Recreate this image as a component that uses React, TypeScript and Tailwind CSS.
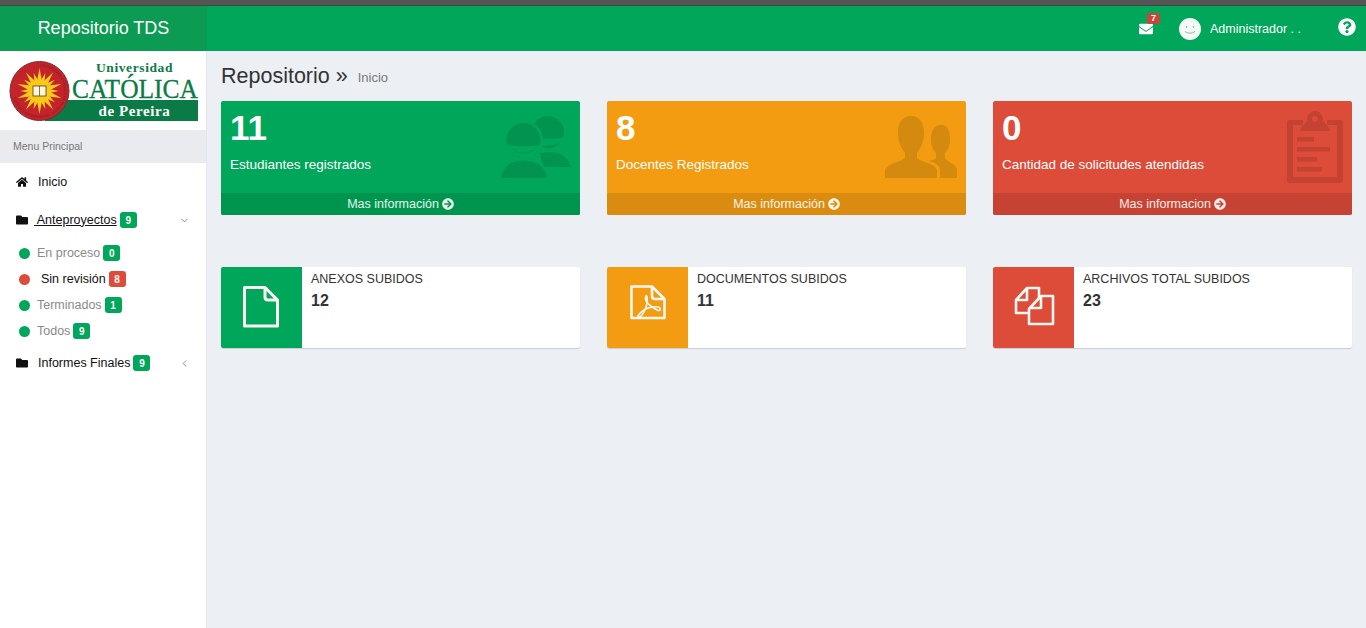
import { FaHome, FaFolder, FaEnvelope, FaQuestionCircle, FaArrowCircleRight } from 'react-icons/fa'
import { ChevronDown, ChevronLeft } from 'lucide-react'
import type { ReactNode } from 'react'

function StudentsIcon() {
  return (
    <svg viewBox="0 0 85 72" className="w-[85px] h-[72px]" fill="currentColor">
      {/* back person */}
      <path d="M37 22 A16 16 0 0 1 69 22 Q69 25 68.5 27.5 Q53 30 38 27.5 Q37 25 37 22 Z" />
      <path d="M43 35 Q53 37 65 33 A16 16 0 0 1 50 38 Z" />
      <path d="M45 43 C52 42 58 42 62 43 C68 45 74 49 76 57 L48 57 Z" />
      {/* front person with a ring in the card colour */}
      <circle cx="28.5" cy="30" r="19.5" fill="#00a65a" />
      <path d="M3 71 C6 52 18 48 29 48 C40 48 52 52 55 71 Z" fill="#00a65a" />
      <path d="M11.5 30 A17 17 0 0 1 45.5 30 Q45.5 33 44.5 35 Q28 37.5 12.5 35 Q11.5 33 11.5 30 Z" />
      <path d="M16 38 Q28 47 41 38 A17 17 0 0 1 16 38 Z" />
      <path d="M6 68 C8 56 16 51 29 50.5 C42 51 50 56 52 68 Z" />
    </svg>
  )
}

function TeachersIcon() {
  return (
    <svg viewBox="0 0 72 62" className="w-[72px] h-[62px]" fill="currentColor">
      <path d="M26 0 C17 0 13 7 13 17 C13 27 17 33 20 37 L20 42 C14 47 2 47 0 54 L0 62 L52 62 L52 54 C50 47 38 47 32 42 L32 37 C35 33 39 27 39 17 C39 7 35 0 26 0 Z" />
      <path d="M56 9 C49 9 46 15 46 23 C46 30 48 34 51 37 L51 42 C49 44 46 44 44 45 C50 47 55 49 55 54 L55 62 L72 62 L72 53 C70 47 63 47 60 42 L60 37 C63 34 65 30 65 23 C65 15 63 9 56 9 Z" />
    </svg>
  )
}

function ClipboardIcon() {
  return (
    <svg viewBox="0 0 56 72" className="w-[56px] h-[72px]" fill="currentColor">
      <path fillRule="evenodd" d="M3 9 H16 V14 H6 V66 H50 V14 H40 V9 H53 Q56 9 56 12 V69 Q56 72 53 72 H3 Q0 72 0 69 V12 Q0 9 3 9 Z" />
      <path fillRule="evenodd" d="M28 0 C33 0 36 4 36 9 C36 12 42 14 43 20 L13 20 C14 14 20 12 20 9 C20 4 23 0 28 0 Z M28 5 A3 3 0 1 0 28 11 A3 3 0 1 0 28 5 Z" />
      <rect x="10" y="26" width="17" height="4.5" />
      <rect x="10" y="36" width="33" height="4.5" />
      <rect x="10" y="46" width="20" height="4.5" />
      <rect x="10" y="56" width="25" height="4.5" />
    </svg>
  )
}

function FileIcon() {
  return (
    <svg viewBox="0 0 81 81" className="w-[81px] h-[81px]" fill="none" stroke="currentColor" strokeWidth="3" strokeLinejoin="round">
      <path d="M23.5 20.5 H44 L56.5 33 V59 H23.5 Z" />
      <path d="M44 20.5 V30 Q44 33 47 33 H56.5" />
    </svg>
  )
}

function PdfIcon() {
  return (
    <svg viewBox="0 0 81 81" className="w-[81px] h-[81px]" fill="none" stroke="currentColor" strokeWidth="2.6" strokeLinejoin="round">
      <g transform="translate(13 8)">
        <path d="M11.5 11.5 H32 L44.5 24 V43 H11.5 Z" />
        <path d="M32 11.5 V21 Q32 24 35 24 H44.5" />
        <path strokeWidth="1.6" d="M26 21 C24 25 28 30 37 35 C40.5 37 42 33 38 32 C31 31 22 34 18 41 C16 44 20 42.5 22 40 C26 35 28 27 27 22 Q26.5 20 26 21 Z" />
      </g>
    </svg>
  )
}

function CopyIcon() {
  return (
    <svg viewBox="0 0 81 81" className="w-[81px] h-[81px]" fill="none" stroke="currentColor" strokeWidth="2.6" strokeLinejoin="round">
      <g transform="translate(12 8)">
        <path d="M24 38 H11 V25 L22 13 H34 V23" />
        <path d="M22 13 V25 H11" />
        <path d="M24 34 L36 21 H48 V49 H24 Z" />
        <path d="M36 21 V33 H24" />
      </g>
    </svg>
  )
}

function Logo() {
  const rays = Array.from({ length: 20 }, (_, i) => (i * 360) / 20)
  return (
    <svg viewBox="0 0 207 79" className="w-[207px] h-[79px] block">
      <rect x="45" y="49" width="153" height="21" fill="#0a7b46" />
      <circle cx="39.5" cy="40" r="29.5" fill="#c3242c" stroke="#7f2a2a" strokeWidth="1" />
      <path id="seal" d="M39.5 15.5 A24.5 24.5 0 1 1 39.4 15.5" fill="none" />
      <text fontSize="3.5" fill="#7a1a1e" fontFamily="'Liberation Sans', sans-serif">
        <textPath href="#seal">UNIVERSIDAD CATÓLICA DE PEREIRA · UNIVERSIDAD CATÓLICA</textPath>
      </text>
      {rays.map((a, i) => (
        <polygon key={a} points={i % 2 ? '37.5,30 41.5,30 39.5,21' : '37,30 42,30 39.5,17'} fill="#f6c91a" transform={`rotate(${a} 39.5 40)`} />
      ))}
      <circle cx="39.5" cy="40" r="11" fill="#f6c91a" />
      <rect x="33" y="35" width="13" height="10" fill="#fff7d8" stroke="#5d3a1a" strokeWidth="0.8" />
      <line x1="39.5" y1="35" x2="39.5" y2="45" stroke="#5d3a1a" strokeWidth="0.7" />
      <text x="134.5" y="20.5" textAnchor="middle" fontFamily="'Liberation Serif', serif" fontWeight="700" fontSize="13.5" letterSpacing="0.6" fill="#0a7b46">Universidad</text>
      <text x="135" y="46.5" textAnchor="middle" fontFamily="'Liberation Serif', serif" fontSize="28" textLength="126" lengthAdjust="spacingAndGlyphs" stroke="#0a7b46" strokeWidth="0.3" fill="#0a7b46">CATÓLICA</text>
      <text x="134.5" y="64.5" textAnchor="middle" fontFamily="'Liberation Serif', serif" fontWeight="700" fontSize="15" letterSpacing="0.6" fill="#ffffff">de Pereira</text>
    </svg>
  )
}

function Badge({ n, red }: { n: number; red?: boolean }) {
  return (
    <span className={`inline-flex items-center justify-center h-[16px] min-w-[17px] px-[5px] rounded-[3px] text-[10px] font-bold text-white ${red ? 'bg-[#dd4b39]' : 'bg-[#00a65a]'}`}>
      {n}
    </span>
  )
}

function SubItem({ label, n, red }: { label: string; n: number; red?: boolean }) {
  return (
    <div className="flex items-center h-[26px] pl-[19px]">
      <span className={`w-[11px] h-[11px] rounded-full ${red ? 'bg-[#dd4b39]' : 'bg-[#00a65a]'}`} />
      <span className={`text-[12.5px] mr-[3px] ${red ? 'ml-[11px] text-[#111]' : 'ml-[7px] text-[#8a8a8a]'}`}>{label}</span>
      <Badge n={n} red={red} />
    </div>
  )
}

function StatCard({ value, label, link, bg, foot, icon }: {
  value: number; label: string; link: string; bg: string; foot: string; icon: ReactNode
}) {
  return (
    <div className={`relative h-[114px] rounded-[2px] overflow-hidden flex flex-col text-white ${bg}`}>
      <div className="flex-1 px-[9px] pt-[6px]">
        <div className="text-[35px] leading-[42px] font-bold">{value}</div>
        <div className="text-[13.5px] leading-[20px] mt-[6px]">{label}</div>
      </div>
      {icon}
      <div className={`h-[22px] flex items-center justify-center gap-[3px] text-[12.5px] text-white/90 ${foot}`}>
        {link} <FaArrowCircleRight className="text-[12px]" />
      </div>
    </div>
  )
}

function InfoBox({ title, value, bg, icon }: { title: string; value: number; bg: string; icon: ReactNode }) {
  return (
    <div className="h-[81px] flex bg-white rounded-[2px] shadow-[0_1px_1px_rgba(0,0,0,0.15)]">
      <div className={`w-[81px] rounded-l-[2px] text-[#fdf8f2] ${bg}`}>{icon}</div>
      <div className="pl-[9px] pt-[4px] text-[#333]">
        <div className="text-[12.5px] leading-[17px]">{title}</div>
        <div className="text-[16px] leading-[20px] mt-[3px] font-bold">{value}</div>
      </div>
    </div>
  )
}

export default function App() {
  return (
    <div className="h-[628px] overflow-hidden flex flex-col bg-[#ecf0f5] font-['Liberation_Sans',Arial,sans-serif]">
      <div className="h-[6px] bg-[#555555] border-b border-[#3c4a42]" />
      <header className="h-[45px] flex items-center text-white bg-[#00a65a]">
        <div className="w-[207px] h-full flex items-center justify-center bg-[#0b9b53] text-[18px]">Repositorio TDS</div>
        <div className="flex-1 flex items-center justify-end h-full">
          <div className="relative mr-[26px]">
            <FaEnvelope className="text-[14px]" />
            <span className="absolute -top-[9px] left-[8px] w-[13px] h-[11px] rounded-[2px] bg-[#c9453a] text-[9px] leading-[11px] font-bold text-center">7</span>
          </div>
          <svg viewBox="0 0 22 22" className="w-[22px] h-[22px] mr-[9px]">
            <circle cx="11" cy="11" r="11" fill="#f4faf6" />
            <circle cx="7.5" cy="9" r="0.8" fill="#8a9a90" />
            <circle cx="14.5" cy="9" r="0.8" fill="#8a9a90" />
            <path d="M6 13.5 Q11 17 16 13.5" stroke="#8a9a90" strokeWidth="0.8" fill="none" />
          </svg>
          <span className="text-[12.5px] w-[128px] mt-[1px]">Administrador . .</span>
          <FaQuestionCircle className="text-[18px] mr-[10px] -mt-[4px]" />
        </div>
      </header>

      <div className="flex-1 flex min-h-0">
        <aside className="w-[207px] bg-white text-[#111] text-[12.5px] border-r border-[#e4e7ea]">
          <Logo />
          <div className="h-[33px] flex items-center pl-[13px] bg-[#eaebee] text-[10.5px] text-[#777]">Menu Principal</div>
          <div className="h-[37px] flex items-center pl-[16px] pt-[1px]">
            <FaHome className="text-[12px] mr-[10px]" />
            <span>Inicio</span>
          </div>
          <div className="h-[40px] flex items-center pl-[16px] pr-[16px]">
            <FaFolder className="text-[12px] mr-[6px]" />
            <span className="underline whitespace-pre mr-[3px]"> Anteproyectos</span>
            <Badge n={9} />
            <ChevronDown size={11} strokeWidth={1.5} className="ml-auto text-[#555]" />
          </div>
          <SubItem label="En proceso" n={0} />
          <SubItem label="Sin revisión" n={8} red />
          <SubItem label="Terminados" n={1} />
          <SubItem label="Todos" n={9} />
          <div className="h-[38px] flex items-center pl-[16px] pr-[16px]">
            <FaFolder className="text-[12px] mr-[10px]" />
            <span className="mr-[3px]">Informes Finales</span>
            <Badge n={9} />
            <ChevronLeft size={11} strokeWidth={1.5} className="ml-auto text-[#555]" />
          </div>
        </aside>

        <main className="flex-1 px-[14px]">
          <div className="h-[50px] flex items-center text-[#333]">
            <span className="text-[21.5px]">Repositorio »</span>
            <span className="text-[13px] text-[#777] ml-[10px] mt-[4px]">Inicio</span>
          </div>
          <div className="grid grid-cols-3 gap-[27px]">
            <StatCard value={11} label="Estudiantes registrados" link="Mas información" bg="bg-[#00a65a]" foot="bg-[#00954f]"
              icon={<div className="absolute right-0 top-[9px] text-[#009450]"><StudentsIcon /></div>} />
            <StatCard value={8} label="Docentes Registrados" link="Mas información" bg="bg-[#f39c12]" foot="bg-[#da8c10]"
              icon={<div className="absolute right-[9px] top-[15px] text-[#d38a0f]"><TeachersIcon /></div>} />
            <StatCard value={0} label="Cantidad de solicitudes atendidas" link="Mas informacion" bg="bg-[#dd4b39]" foot="bg-[#c64333]"
              icon={<div className="absolute right-[9px] top-[10px] text-[#c44232]"><ClipboardIcon /></div>} />
          </div>
          <div className="grid grid-cols-3 gap-[27px] mt-[52px]">
            <InfoBox title="ANEXOS SUBIDOS" value={12} bg="bg-[#00a65a]" icon={<FileIcon />} />
            <InfoBox title="DOCUMENTOS SUBIDOS" value={11} bg="bg-[#f39c12]" icon={<PdfIcon />} />
            <InfoBox title="ARCHIVOS TOTAL SUBIDOS" value={23} bg="bg-[#dd4b39]" icon={<CopyIcon />} />
          </div>
        </main>
      </div>
    </div>
  )
}
